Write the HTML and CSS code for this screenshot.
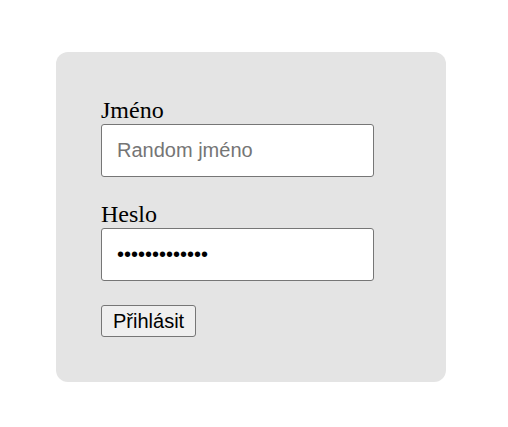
FILE: index.html
```html
<!DOCTYPE html>
<html lang="cs">
<head>
<meta charset="utf-8">
<link rel="stylesheet" href="styles.css">
</head>
<body>
<form class="login">
  <label class="label" for="name">Jméno</label>
  <input class="field" id="name" type="text" placeholder="Random jméno">
  <label class="label" for="pass">Heslo</label>
  <input class="field" id="pass" type="password" value="heslo12345678">
  <button class="btn" type="button">Přihlásit</button>
</form>
</body>
</html>
```
FILE: styles.css
```css
body {
  margin: 0;
  padding: 52px 0 0 56px;
  background: #fff;
}
.login {
  box-sizing: border-box;
  width: 390px;
  height: 330px;
  padding: 45px;
  background: #e4e4e4;
  border-radius: 12px;
  display: flex;
  flex-direction: column;
  align-items: flex-start;
}
.label {
  font-family: "Liberation Serif", serif;
  font-size: 24px;
  line-height: 27px;
  height: 27px;
  color: #000;
}
.field {
  box-sizing: border-box;
  width: 273px;
  height: 53px;
  margin: 0 0 24px;
  padding: 0 15px;
  font-family: "Liberation Sans", Arial, sans-serif;
  font-size: 20px;
  color: #000;
  background: #fff;
  border: 1px solid #767676;
  border-radius: 3px;
  outline: none;
}
.field::placeholder {
  color: #757575;
}
.btn {
  box-sizing: border-box;
  height: 32px;
  padding: 0 11px;
  font-family: "Liberation Sans", Arial, sans-serif;
  font-size: 20px;
  color: #000;
  background: #efefef;
  border: 1px solid #767676;
  border-radius: 3px;
}
```
